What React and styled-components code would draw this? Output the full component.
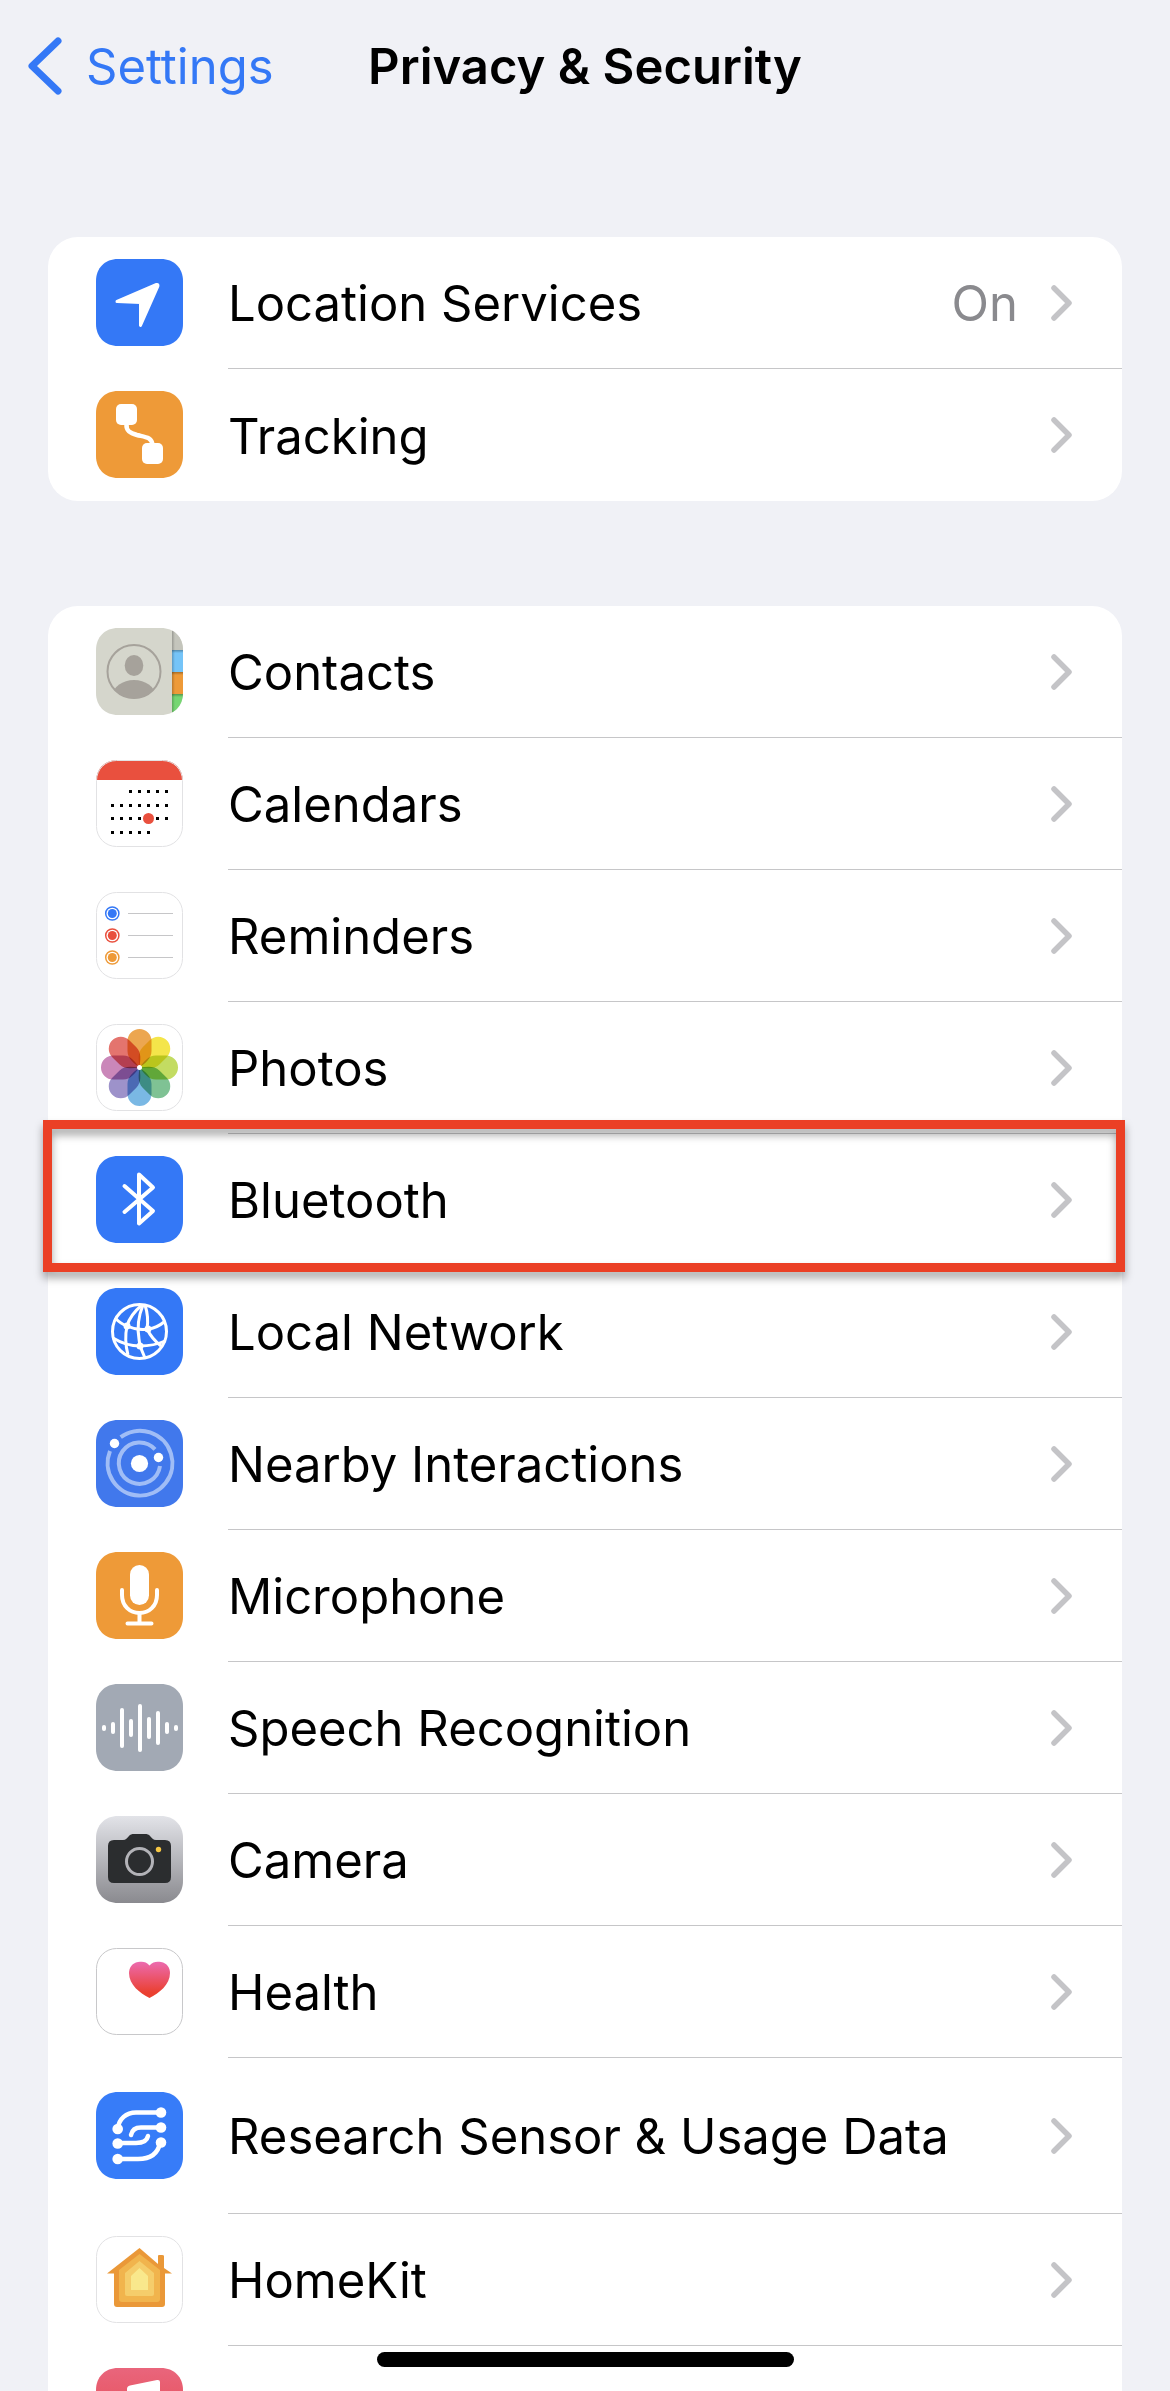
import React from "react";
import styled, { createGlobalStyle, css } from "styled-components";

const GlobalStyle = createGlobalStyle`
  * { box-sizing: border-box; }
  html, body { margin: 0; background: #f0f1f6; }
`;

const Screen = styled.div`
  height: 100vh;
  overflow: hidden;
  background: #f0f1f6;
  color: #000;
  font-family: Inter, "Liberation Sans", sans-serif;
  font-size: 49px;
  line-height: 60px;
`;

const Header = styled.header`
  display: grid;
  grid-template-columns: 1fr auto 1fr;
  align-items: center;
  height: 132px;
  padding: 0 26px;
`;

const BackLink = styled.a`
  display: flex;
  align-items: center;
  gap: 24px;
  color: #3478f6;
  text-decoration: none;
`;

const BackLabel = styled.span`
  padding-top: 2px;
`;

const Title = styled.h1`
  margin: 0;
  padding-top: 2px;
  font-size: 49px;
  font-weight: 600;
  line-height: 60px;
`;

const Content = styled.main`
  display: flex;
  flex-direction: column;
  gap: 105px;
  padding: 105px 48px 0;
`;

const Group = styled.ul`
  margin: 0;
  padding: 0;
  list-style: none;
  background: #fff;
  border-radius: 30px;
`;

const Item = styled.li`
  position: relative;
`;

const RowLink = styled.a`
  display: flex;
  align-items: center;
  gap: 45px;
  height: ${(p) => (p.$tall ? 156 : 132)}px;
  padding-left: 48px;
  color: inherit;
  text-decoration: none;
`;

const RowBody = styled.span`
  display: flex;
  flex: 1;
  align-items: center;
  height: 100%;
  padding-right: 48px;
  ${(p) =>
    p.$line &&
    css`
      border-bottom: 1px solid #c6c6c8;
    `}
`;

const Label = styled.span`
  flex: 1;
  padding-top: 3px;
  white-space: nowrap;
`;

const Value = styled.span`
  margin-right: 33px;
  padding-top: 3px;
  color: #8a8a8e;
`;

const IconSvg = styled.svg`
  display: block;
  flex: none;
  width: 87px;
  height: 87px;
  margin-bottom: 1px;
`;

const ArrowSvg = styled.svg`
  display: block;
  flex: none;
`;

const Highlight = styled.div`
  position: absolute;
  inset: -14px -3px -6px -5px;
  border: 9px solid #eb4025;
  filter: drop-shadow(0 6px 4px rgba(0, 0, 0, 0.35));
  pointer-events: none;
`;

const HomeIndicator = styled.div`
  position: fixed;
  bottom: 24px;
  left: 50%;
  width: 417px;
  height: 15px;
  margin-left: -208px;
  border-radius: 8px;
  background: #000;
`;

const BLUE = "#3478f6";
const ORANGE = "#ee9a38";
const TILE =
  "M22 0H65C78 0 87 9 87 22V65C87 78 78 87 65 87H22C9 87 0 78 0 65V22C0 9 9 0 22 0Z";

function Tile({ fill, outline, children }) {
  return (
    <IconSvg viewBox="0 0 87 87" aria-hidden="true">
      <path d={TILE} fill={fill} />
      {children}
      {outline && (
        <rect x="0.5" y="0.5" width="86" height="86" rx="20" fill="none" stroke={outline} />
      )}
    </IconSvg>
  );
}

const LocationIcon = () => (
  <Tile fill={BLUE}>
    <path
      d="M21 42.5 60.5 25.5Q62.500 25 61.800 27.500L44.500 66.500V43.500Z"
      fill="#fff"
      stroke="#fff"
      strokeWidth="3"
      strokeLinejoin="round"
    />
  </Tile>
);

const TrackingIcon = () => (
  <Tile fill={ORANGE}>
    <rect x="20" y="13" width="21" height="21" rx="5" fill="#fff" />
    <rect x="46" y="52" width="21" height="21" rx="5" fill="#fff" />
    <path
      d="M30.500 33C30 40 34 42 41 44 49 46 56 46 56.500 54"
      fill="none"
      stroke="#fff"
      strokeWidth="4.500"
    />
  </Tile>
);

const ContactsIcon = () => (
  <Tile fill="#d5d6cc">
    <defs>
      <clipPath id="contactsTile"><path d={TILE} /></clipPath>
      <clipPath id="contactsFace"><circle cx="38" cy="43.500" r="27" /></clipPath>
      <linearGradient id="tabShade" x1="0" y1="0" x2="0" y2="1">
        <stop offset="0" stopColor="#000" stopOpacity="0.300" />
        <stop offset="1" stopColor="#000" stopOpacity="0" />
      </linearGradient>
      <linearGradient id="coverShade" x1="0" y1="0" x2="1" y2="0">
        <stop offset="0" stopColor="#000" stopOpacity="0.220" />
        <stop offset="1" stopColor="#000" stopOpacity="0" />
      </linearGradient>
    </defs>
    <g clipPath="url(#contactsTile)">
      <rect x="76" y="0" width="11" height="22" fill="#c4c5bc" />
      <rect x="76" y="22" width="11" height="22" fill="#75c4f8" />
      <rect x="76" y="44" width="11" height="22" fill={ORANGE} />
      <rect x="76" y="66" width="11" height="21" fill="#76d672" />
      <rect x="76" y="22" width="11" height="3" fill="url(#tabShade)" />
      <rect x="76" y="44" width="11" height="3" fill="url(#tabShade)" />
      <rect x="76" y="66" width="11" height="3" fill="url(#tabShade)" />
      <rect x="76" y="0" width="3" height="87" fill="url(#coverShade)" />
    </g>
    <circle cx="38" cy="43.500" r="26.500" fill="none" stroke="#a6a29b" strokeWidth="2" />
    <ellipse cx="38" cy="37.500" rx="9.300" ry="10.500" fill="#a6a29b" />
    <ellipse cx="38" cy="67" rx="21" ry="15" fill="#a6a29b" clipPath="url(#contactsFace)" />
  </Tile>
);

const CALENDAR_ROWS = [
  [30, 2, 6],
  [44, 0, 6],
  [57, 0, 6],
  [71, 0, 4],
];

const CalendarIcon = () => (
  <Tile fill="#fff" outline="#e2e2e4">
    <path d="M0 20C1 8 9 0 22 0H65C78 0 86 8 87 20Z" fill="#e9503e" />
    {CALENDAR_ROWS.flatMap(([y, from, to]) =>
      Array.from({ length: to - from + 1 }, (_, i) => (
        <rect key={`${y}-${i}`} x={15 + (from + i) * 9} y={y} width="3" height="3" fill="#000" />
      ))
    )}
    <circle cx="52.500" cy="58.500" r="5.500" fill="#e9503e" />
  </Tile>
);

const REMINDERS = [
  [21.5, "#3478f6"],
  [43.5, "#e9503e"],
  [65.5, "#ee9a38"],
];

const RemindersIcon = () => (
  <Tile fill="#fff" outline="#e2e2e4">
    {REMINDERS.map(([y, color]) => (
      <g key={y}>
        <circle cx="16.300" cy={y} r="6.600" fill="none" stroke={color} strokeWidth="1.500" />
        <circle cx="16.300" cy={y} r="4.500" fill={color} />
        <path d={`M32 ${y}H77`} stroke="#c6c6c8" />
      </g>
    ))}
  </Tile>
);

const PETALS = ["#eca650", "#f4e54a", "#c3dc62", "#7fc294", "#7ab8e4", "#9d92ca", "#ca87b9", "#e4746e"];

const PhotosIcon = () => (
  <Tile fill="#fff" outline="#e2e2e4">
    <g style={{ isolation: "isolate" }}>
      {PETALS.map((color, i) => (
        <path
          key={color}
          d="M31.500 17A12 12 0 0 1 55.500 17V27C55.500 35 49 39 43.500 43.500C38 39 31.500 35 31.500 27Z"
          fill={color}
          transform={`rotate(${i * 45} 43.500 43.500)`}
          style={{ mixBlendMode: "multiply" }}
        />
      ))}
    </g>
    <circle cx="43.500" cy="43.500" r="2.500" fill="#fff" />
  </Tile>
);

const BluetoothIcon = () => (
  <Tile fill={BLUE}>
    <path
      d="M28.500 30 57 55 43 67.500V18.500L57 31.500 28.500 56"
      fill="none"
      stroke="#fff"
      strokeWidth="4"
      strokeLinecap="round"
      strokeLinejoin="round"
    />
  </Tile>
);

const NetworkIcon = () => (
  <Tile fill={BLUE}>
    <g fill="none" stroke="#fff" strokeWidth="3">
      <circle cx="43.500" cy="43.500" r="27" />
      <path d="M46 17Q34 27 31 38Q28 52 32 67" />
      <path d="M47 17Q40 34 43 51L44 58L49 70" />
      <path d="M49 17Q53 29 51 41Q56 51 65 58" />
      <path d="M19 30Q25 36 31 38Q42 43 52 41Q61 40 68 34" />
      <path d="M17 50Q30 58 44 58Q58 58 69 53" />
    </g>
    <g fill="#fff">
      <circle cx="31" cy="38" r="3.500" />
      <circle cx="52" cy="41" r="3.500" />
      <circle cx="44" cy="58" r="3.500" />
    </g>
  </Tile>
);

const NearbyIcon = () => (
  <Tile fill="#4178ec">
    <g fill="none" stroke="#a0bdf6" strokeWidth="4">
      <path d="M24.700 17.200A32.400 32.400 0 1 1 14 31" />
      <path d="M59 29.400A20.700 20.700 0 1 0 64 46" />
    </g>
    <g fill="#fff">
      <circle cx="43.500" cy="43.500" r="8.600" />
      <circle cx="18.500" cy="23.500" r="4.700" />
      <circle cx="62.500" cy="37.500" r="4.700" />
    </g>
  </Tile>
);

const MicrophoneIcon = () => (
  <Tile fill={ORANGE}>
    <rect x="34" y="13" width="19" height="40" rx="9.500" fill="#fff" />
    <path
      d="M26 38V43C26 54 34 61 43.500 61S61 54 61 43V38M43.500 61V71.500M31.500 71.500H55.500"
      fill="none"
      stroke="#fff"
      strokeWidth="4"
      strokeLinecap="round"
    />
  </Tile>
);

const WAVE = [[8, 41, 47], [17, 38, 50], [26, 24, 64], [35, 35, 53], [44, 20, 68], [53, 33, 55], [62, 27, 61], [71, 38, 50], [80, 41, 47]];

const SpeechIcon = () => (
  <Tile fill="#a2a9b4">
    {WAVE.map(([x, top, bottom]) => (
      <rect key={x} x={x - 2} y={top} width="4" height={bottom - top} rx="2" fill="#fff" />
    ))}
  </Tile>
);

const CameraIcon = () => (
  <Tile fill="url(#cameraTile)">
    <defs>
      <linearGradient id="cameraTile" x1="0" y1="0" x2="0" y2="1">
        <stop offset="0" stopColor="#e2e3e8" />
        <stop offset="1" stopColor="#8a8a8f" />
      </linearGradient>
    </defs>
    <path
      d="M18 24H27C30 24 31 22 33 20C34 18.500 36 18 38 18H49C51 18 53 18.500 54 20C56 22 57 24 60 24H69Q75 24 75 30V61Q75 67 69 67H18Q12 67 12 61V30Q12 24 18 24Z"
      fill="#2b2d2f"
    />
    <circle cx="43.500" cy="45.500" r="13" fill="#2b2d2f" stroke="#b3b3b8" strokeWidth="3" />
    <circle cx="62.500" cy="33.500" r="2.700" fill="#f7c744" />
  </Tile>
);

const HealthIcon = () => (
  <Tile fill="#fff" outline="#c8c8ca">
    <defs>
      <linearGradient id="heart" x1="0" y1="0" x2="0" y2="1">
        <stop offset="0" stopColor="#ec6bb0" />
        <stop offset="0.850" stopColor="#ea4030" />
      </linearGradient>
    </defs>
    <path
      d="M53.500 17.500C57 13 62 13.500 65 14C71 15 74 20 74 25C74 37 63 45 53.500 50C44 45 33 37 33 25C33 20 36 15 42 14C46 13.500 50 13 53.500 17.500Z"
      fill="url(#heart)"
    />
  </Tile>
);

const ResearchIcon = () => (
  <Tile fill="#377cf8">
    <g fill="none" stroke="#fff" strokeWidth="4.500" strokeLinecap="round">
      <path d="M22 36C23 27 30 20.500 40 20.500H65" />
      <path d="M35 43C36 38 40 35.500 45 35.500H65" />
      <path d="M22 51H40C47 51 51 49 52 44" />
      <path d="M22 67H42C56 67 62 61 64 51" />
    </g>
    <g fill="#fff">
      <circle cx="65" cy="20.500" r="5.300" />
      <circle cx="21.700" cy="37" r="5.300" />
      <circle cx="65" cy="35.500" r="5.300" />
      <circle cx="21.700" cy="51.500" r="5.300" />
      <circle cx="65" cy="50.500" r="5.300" />
      <circle cx="21.700" cy="67" r="5.300" />
    </g>
  </Tile>
);

const HomeKitIcon = () => (
  <Tile fill="#fff" outline="#e2e2e4">
    <path d="M62 28V20Q62 19 63 19H66Q68 19 68 20V32L76 37.500H69V68Q69 71 66 71H21Q18 71 18 68V37.500H11L43.500 12Z" fill="#ea9838" />
    <path d="M43.500 18 64 34V63Q64 66 61 66H26Q23 66 23 63V34Z" fill="#f1b44d" />
    <path d="M43.500 25 58 37V58Q58 60 56 60H31Q29 60 29 58V37Z" fill="#f5cd6b" />
    <path d="M43.500 32 52 40V54H35V40Z" fill="#f9e88c" />
  </Tile>
);

const MusicIcon = () => (
  <Tile fill="url(#musicTile)">
    <defs>
      <linearGradient id="musicTile" x1="0" y1="0" x2="0" y2="1">
        <stop offset="0" stopColor="#e9657c" />
        <stop offset="1" stopColor="#e64444" />
      </linearGradient>
    </defs>
    <path
      d="M31 21Q31 18 34 17.500L61 12Q64 11.500 64 14V56A9 8 0 1 1 58 49V28L37 32V63A9 8 0 1 1 31 56Z"
      fill="#fff"
    />
  </Tile>
);

const Arrow = () => (
  <ArrowSvg width="23" height="38" viewBox="0 0 23 38" aria-hidden="true">
    <path d="M3 4 18 19 3 34" fill="none" stroke="#c4c4c7" strokeWidth="5.500" strokeLinecap="round" strokeLinejoin="round" />
  </ArrowSvg>
);

const GENERAL = [
  { label: "Location Services", Icon: LocationIcon, value: "On" },
  { label: "Tracking", Icon: TrackingIcon },
];

const APPS = [
  { label: "Contacts", Icon: ContactsIcon },
  { label: "Calendars", Icon: CalendarIcon },
  { label: "Reminders", Icon: RemindersIcon },
  { label: "Photos", Icon: PhotosIcon },
  { label: "Bluetooth", Icon: BluetoothIcon, highlighted: true },
  { label: "Local Network", Icon: NetworkIcon },
  { label: "Nearby Interactions", Icon: NearbyIcon },
  { label: "Microphone", Icon: MicrophoneIcon },
  { label: "Speech Recognition", Icon: SpeechIcon },
  { label: "Camera", Icon: CameraIcon },
  { label: "Health", Icon: HealthIcon },
  { label: "Research Sensor & Usage Data", Icon: ResearchIcon, tall: true },
  { label: "HomeKit", Icon: HomeKitIcon },
  { name: "Media & Apple Music", Icon: MusicIcon },
];

function Rows({ items }) {
  return (
    <Group>
      {items.map(({ label, name, Icon, value, tall, highlighted }, i) => (
        <Item key={label || name}>
          <RowLink href="#" $tall={tall} aria-label={name}>
            <Icon />
            <RowBody $line={i < items.length - 1}>
              <Label>{label}</Label>
              {value && <Value>{value}</Value>}
              {label && <Arrow />}
            </RowBody>
          </RowLink>
          {highlighted && <Highlight />}
        </Item>
      ))}
    </Group>
  );
}

export default function App() {
  return (
    <>
      <GlobalStyle />
      <Screen>
        <Header>
          <BackLink href="#">
            <ArrowSvg width="36" height="58" viewBox="0 0 36 58" aria-hidden="true">
              <path d="M32 4 6 29 32 54" fill="none" stroke="#3478f6" strokeWidth="7" strokeLinecap="round" strokeLinejoin="round" />
            </ArrowSvg>
            <BackLabel>Settings</BackLabel>
          </BackLink>
          <Title>Privacy &amp; Security</Title>
        </Header>
        <Content>
          <Rows items={GENERAL} />
          <Rows items={APPS} />
        </Content>
        <HomeIndicator />
      </Screen>
    </>
  );
}
